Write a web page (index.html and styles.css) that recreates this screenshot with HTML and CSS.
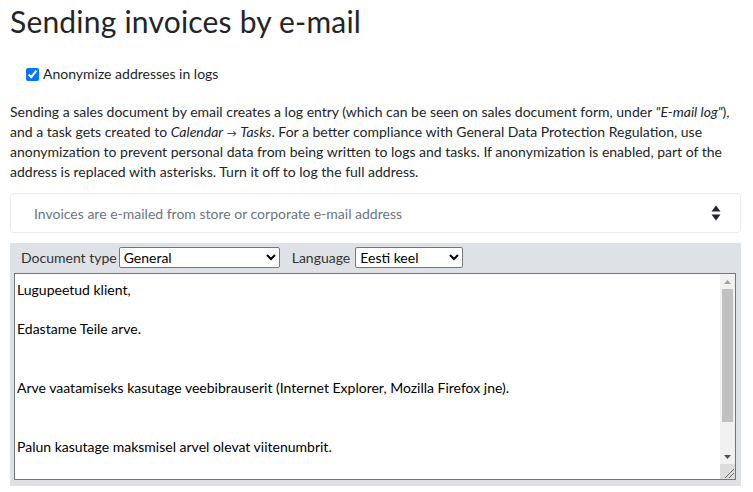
FILE: index.html
```html
<!DOCTYPE html>
<html lang="en">
<head>
    <meta charset="UTF-8">
    <meta name="viewport" content="width=device-width, initial-scale=1.0">
    <title>Sending invoices by e-mail</title>
    <link rel="stylesheet" href="styles.css">
</head>
<body>
    <div class="page">
        <h1>Sending invoices by e-mail</h1>

        <label class="check">
            <input type="checkbox" checked>
            <span>Anonymize addresses in logs</span>
        </label>

        <p class="info">
            Sending a sales document by email creates a log entry (which can be seen on sales document form, under <i>"E-mail log"</i>),
            and a task gets created to <i>Calendar</i> <span class="arrow">&rarr;</span> <i>Tasks</i>. For a better compliance with General Data Protection Regulation, use
            anonymization to prevent personal data from being written to logs and tasks. If anonymization is enabled, part of the
            address is replaced with asterisks. Turn it off to log the full address.
        </p>

        <div class="picker">
            <span>Invoices are e-mailed from store or corporate e-mail address</span>
            <svg class="sort" width="10" height="16" viewBox="0 0 10 16">
                <path d="M5 0.5 L9.5 6.5 L0.5 6.5 Z" fill="#212529"/>
                <path d="M5 15.5 L9.5 9.5 L0.5 9.5 Z" fill="#212529"/>
            </svg>
        </div>

        <div class="editor">
            <div class="toolbar">
                <label for="doctype">Document type</label>
                <select id="doctype" class="doctype">
                    <option>General</option>
                </select>
                <label for="lang" class="lang-label">Language</label>
                <select id="lang" class="lang">
                    <option>Eesti keel</option>
                </select>
            </div>
            <div class="text-wrap">
                <textarea class="body-text">Lugupeetud klient,

Edastame Teile arve.


Arve vaatamiseks kasutage veebibrauserit (Internet Explorer, Mozilla Firefox jne).


Palun kasutage maksmisel arvel olevat viitenumbrit.


Lugupidamisega,



</textarea>
                <!-- drawn scrollbar, the screenshot browser hides real ones -->
                <div class="scrollbar">
                    <div class="sb-btn">
                        <svg width="7" height="4" viewBox="0 0 7 4"><path d="M3.5 0 L7 4 L0 4 Z" fill="#a3a3a3"/></svg>
                    </div>
                    <div class="sb-track"><div class="sb-thumb"></div></div>
                    <div class="sb-btn">
                        <svg width="7" height="4" viewBox="0 0 7 4"><path d="M0 0 L7 0 L3.5 4 Z" fill="#505050"/></svg>
                    </div>
                    <div class="sb-corner">
                        <svg width="15" height="15" viewBox="0 0 15 15">
                            <path d="M5 14 L14 5 M9 14 L14 9" stroke="#6a6a6a" stroke-width="1"/>
                        </svg>
                    </div>
                </div>
            </div>
        </div>
    </div>
</body>
</html>
```

FILE: styles.css
```css
body {
    font-family: Lato, "Open Sans", Arial, sans-serif;
    font-size: 14px;
    color: #212529;
    background-color: #fff;
    margin: 0;
}
.page {
    padding: 0 12px 0 10px;
}
h1 {
    font-size: 30px;
    font-weight: normal;
    letter-spacing: 0.2px;
    margin: 0;
    padding-top: 3px;
    line-height: 36px;
}
.check {
    display: flex;
    align-items: center;
    gap: 4px;
    margin: 25px 0 0 16px;
    line-height: 20px;
}
.check input {
    margin: 0;
    width: 13px;
    height: 13px;
}
.info {
    margin: 18px 0 0;
    line-height: 20px;
}
.arrow {
    font-size: 10px;
    line-height: 0;
}
.picker {
    display: flex;
    justify-content: space-between;
    align-items: center;
    margin-top: 11px;
    height: 38px;
    padding: 0 19px 0 23px;
    border: 1px solid #e9ecef;
    border-radius: 4px;
    color: #6c757d;
}
.editor {
    margin-top: 10px;
    background-color: #dee2e6;
    padding: 4px 5px 6px 4px;
}
.toolbar {
    display: flex;
    align-items: center;
    gap: 2px;
    padding-left: 7px;
    height: 21px;
    color: #333;
}
.toolbar select {
    font-family: inherit;
    font-size: 14px;
    height: 21px;
    border: 1px solid #767676;
    border-radius: 2px;
    background-color: #fff;
    color: #000;
    padding: 0;
}
.doctype {
    width: 161px;
}
.lang-label {
    margin-left: 10px;
    margin-right: 3px;
}
.lang {
    width: 108px;
}
.text-wrap {
    position: relative;
    margin-top: 5px;
}
.body-text {
    display: block;
    box-sizing: border-box;
    width: 100%;
    height: 207px;
    padding: 6px 18px 6px 2px;
    border: 1px solid #767676;
    font-family: inherit;
    font-size: 14px;
    line-height: 19.6px;
    color: #000;
    resize: none;
    overflow: hidden;
}
.scrollbar {
    position: absolute;
    top: 1px;
    right: 1px;
    bottom: 1px;
    width: 15px;
    display: flex;
    flex-direction: column;
    background-color: #f1f1f1;
}
.sb-btn {
    height: 15px;
    display: flex;
    align-items: center;
    justify-content: center;
}
.sb-track {
    flex: 1;
    padding: 0 2px;
}
.sb-thumb {
    height: 133px;
    background-color: #c1c1c1;
}
.sb-corner {
    height: 15px;
    background-color: #dcdcdc;
}
.sb-corner svg {
    display: block;
}
```
